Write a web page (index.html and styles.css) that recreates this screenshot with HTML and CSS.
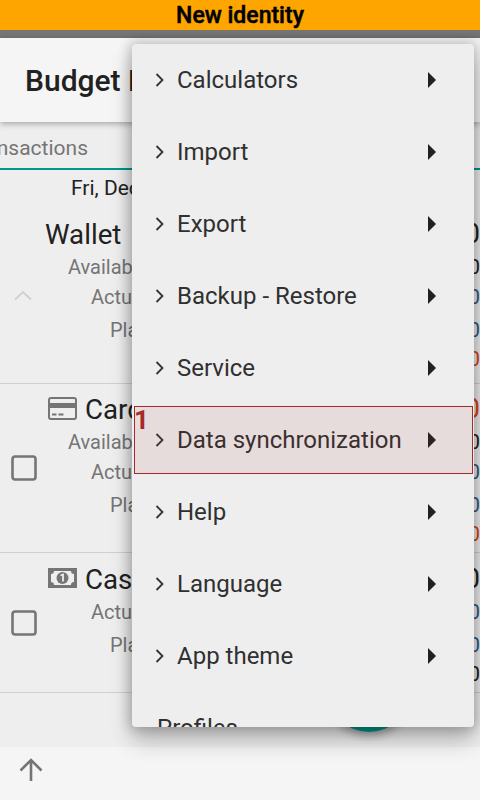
FILE: index.html
```html
<!DOCTYPE html>
<html lang="en">
<head>
<meta charset="utf-8">
<title>Budget</title>
<link rel="stylesheet" href="styles.css">
</head>
<body>
<div class="app">
  <header class="banner">New identity</header>
  <div class="status"></div>
  <div class="appbar"><h1 class="title">Budget Planner</h1></div>
  <nav class="tabs"><span class="tab">Transactions</span></nav>
  <main class="list">
    <div class="date">Fri, Dec 1</div>
    <section class="acct acct-wallet">
      <div class="lead">
        <svg class="chev-up" viewBox="0 0 20 12"><path d="M2 10.500 10 3l8 7.500" fill="none" stroke="#d0d0d0" stroke-width="1.800"/></svg>
      </div>
      <div class="lines">
        <div class="line name"><span class="nm nm-plain">Wallet</span><span class="val">0.00</span></div>
        <div class="line"><span class="lb lb-av">Available</span><span class="val">0.00</span></div>
        <div class="line"><span class="lb lb-ac">Actual</span><span class="val blue">0.00</span></div>
        <div class="line sp"><span class="lb lb-pl">Planned</span><span class="val blue">0.00</span></div>
        <div class="line tight"><span></span><span class="val red">0.00</span></div>
      </div>
    </section>
    <section class="acct acct-card">
      <div class="lead">
        <svg class="check" viewBox="0 0 26 26"><rect x="1.500" y="1.500" width="23" height="23" rx="2.500" fill="none" stroke="#757575" stroke-width="2.600"/></svg>
      </div>
      <div class="lines">
        <div class="line name"><span class="nm">
          <svg class="ico" viewBox="0 0 29 23"><rect x="1" y="1" width="27" height="21" rx="2" fill="none" stroke="#757575" stroke-width="2"/><rect x="1" y="6" width="27" height="5" fill="#757575"/><path d="M4 17.500h4.500M10.500 17.500h5" stroke="#757575" stroke-width="2"/></svg>Card</span><span class="val red">0.00</span></div>
        <div class="line"><span class="lb lb-av">Available</span><span class="val">0.00</span></div>
        <div class="line"><span class="lb lb-ac">Actual</span><span class="val blue">0.00</span></div>
        <div class="line sp"><span class="lb lb-pl">Planned</span><span class="val blue">0.00</span></div>
        <div class="line tight"><span></span><span class="val red">0.00</span></div>
      </div>
    </section>
    <section class="acct acct-cash">
      <div class="lead">
        <svg class="check" viewBox="0 0 26 26"><rect x="1.500" y="1.500" width="23" height="23" rx="2.500" fill="none" stroke="#757575" stroke-width="2.600"/></svg>
      </div>
      <div class="lines">
        <div class="line name"><span class="nm">
          <svg class="ico" viewBox="0 0 29 20"><path fill="#757575" d="M0 0h29v20H0z"/><path fill="#eee" d="M6 3h17a3 3 0 0 0 3 3v8a3 3 0 0 0-3 3H6a3 3 0 0 0-3-3V6a3 3 0 0 0 3-3z"/><circle cx="14.500" cy="10" r="6" fill="#757575"/><path d="M12.500 7.500 15 6.500v7" fill="none" stroke="#eee" stroke-width="1.800"/></svg>Cash</span><span class="val">0.00</span></div>
        <div class="line"><span class="lb lb-ac">Actual</span><span class="val blue">0.00</span></div>
        <div class="line sp"><span class="lb lb-pl">Planned</span><span class="val blue">0.00</span></div>
        <div class="line tight"><span></span><span class="val">0.00</span></div>
      </div>
    </section>
  </main>
  <footer class="bottom">
    <svg class="arrow" viewBox="0 0 26 26"><path d="M13 24V3M2.500 13.500 13 3l10.500 10.500" fill="none" stroke="#757575" stroke-width="2.600"/></svg>
  </footer>
  <div class="fab"></div>
  <div class="menu">
    <div class="item"><svg class="chev" viewBox="0 0 10 16"><path d="M1.500 2l6 6-6 6" fill="none" stroke="#333" stroke-width="1.800"/></svg><span class="label">Calculators</span><svg class="tri" viewBox="0 0 8 16"><path d="M0 0l8 8-8 8z" fill="#212121"/></svg></div>
    <div class="item"><svg class="chev" viewBox="0 0 10 16"><path d="M1.500 2l6 6-6 6" fill="none" stroke="#333" stroke-width="1.800"/></svg><span class="label">Import</span><svg class="tri" viewBox="0 0 8 16"><path d="M0 0l8 8-8 8z" fill="#212121"/></svg></div>
    <div class="item"><svg class="chev" viewBox="0 0 10 16"><path d="M1.500 2l6 6-6 6" fill="none" stroke="#333" stroke-width="1.800"/></svg><span class="label">Export</span><svg class="tri" viewBox="0 0 8 16"><path d="M0 0l8 8-8 8z" fill="#212121"/></svg></div>
    <div class="item"><svg class="chev" viewBox="0 0 10 16"><path d="M1.500 2l6 6-6 6" fill="none" stroke="#333" stroke-width="1.800"/></svg><span class="label">Backup - Restore</span><svg class="tri" viewBox="0 0 8 16"><path d="M0 0l8 8-8 8z" fill="#212121"/></svg></div>
    <div class="item"><svg class="chev" viewBox="0 0 10 16"><path d="M1.500 2l6 6-6 6" fill="none" stroke="#333" stroke-width="1.800"/></svg><span class="label">Service</span><svg class="tri" viewBox="0 0 8 16"><path d="M0 0l8 8-8 8z" fill="#212121"/></svg></div>
    <div class="item"><svg class="chev" viewBox="0 0 10 16"><path d="M1.500 2l6 6-6 6" fill="none" stroke="#333" stroke-width="1.800"/></svg><span class="label">Data synchronization</span><svg class="tri" viewBox="0 0 8 16"><path d="M0 0l8 8-8 8z" fill="#212121"/></svg><div class="mark"><span class="mark-n">1</span></div></div>
    <div class="item"><svg class="chev" viewBox="0 0 10 16"><path d="M1.500 2l6 6-6 6" fill="none" stroke="#333" stroke-width="1.800"/></svg><span class="label">Help</span><svg class="tri" viewBox="0 0 8 16"><path d="M0 0l8 8-8 8z" fill="#212121"/></svg></div>
    <div class="item"><svg class="chev" viewBox="0 0 10 16"><path d="M1.500 2l6 6-6 6" fill="none" stroke="#333" stroke-width="1.800"/></svg><span class="label">Language</span><svg class="tri" viewBox="0 0 8 16"><path d="M0 0l8 8-8 8z" fill="#212121"/></svg></div>
    <div class="item"><svg class="chev" viewBox="0 0 10 16"><path d="M1.500 2l6 6-6 6" fill="none" stroke="#333" stroke-width="1.800"/></svg><span class="label">App theme</span><svg class="tri" viewBox="0 0 8 16"><path d="M0 0l8 8-8 8z" fill="#212121"/></svg></div>
    <div class="item item-plain"><span class="label">Profiles</span></div>
  </div>
</div>
</body>
</html>
```
FILE: styles.css
```css
* { box-sizing: border-box; }
html, body { margin: 0; height: 100%; }
body { font-family: Roboto, "Noto Sans", sans-serif; background: #eee; }
.app { position: relative; width: 480px; height: 800px; overflow: hidden; display: flex; flex-direction: column; background: #eee; }
.banner { height: 30px; flex: none; background: #ffa500; color: #000; font-size: 23px; font-weight: 500; line-height: 32px; text-align: center; -webkit-text-stroke: 0.5px #000; }
.status { height: 8px; flex: none; background: #757575; }
.appbar { position: relative; z-index: 2; height: 84px; flex: none; background: #f5f5f5; display: flex; align-items: center; padding-left: 25px; box-shadow: 0 2px 6px rgba(0,0,0,.3); }
.title { margin: 0; font-size: 30px; font-weight: 500; color: #212121; white-space: nowrap; }
.tabs { height: 48px; flex: none; border-bottom: 2px solid #009688; display: flex; align-items: center; padding-top: 6px; }
.tab { width: 88px; display: flex; justify-content: flex-end; white-space: nowrap; font-size: 21px; color: #757575; }
.list { flex: 1; min-height: 0; }
.date { height: 36px; line-height: 36px; padding-left: 71px; font-size: 21px; color: #212121; }
.acct { display: flex; padding: 7px 0 3px; border-bottom: 1px solid #d0d0d0; }
.acct-wallet { padding: 10px 0 9px; }
.acct-cash { padding-top: 8px; }
.lead { width: 45px; flex: none; display: flex; align-items: center; justify-content: flex-start; }
.acct-card .lead { padding-bottom: 4px; }
.acct-cash .lead { padding-bottom: 5px; }
.check { width: 26px; height: 26px; margin-left: 11px; }
.chev-up { width: 20px; height: 12px; margin-left: 13px; }
.lines { flex: 1; min-width: 0; }
.line { height: 30px; display: flex; align-items: center; justify-content: space-between; white-space: nowrap; }
.line.name { height: 36px; }
.line.sp { margin-top: 3px; }
.line.tight { margin-top: -1px; }
.nm { display: flex; align-items: center; font-size: 27.700px; color: #212121; padding-left: 3px; }
.nm-plain { padding-left: 0; }
.ico { width: 29px; height: 23px; margin: -1px 8px 0 0; }
.acct-cash .ico { height: 20px; margin-top: -2px; }
.lb { font-size: 20px; color: #757575; }
.lb-av { padding-left: 23px; }
.lb-ac { padding-left: 46px; }
.lb-pl { padding-left: 65px; }
.val { font-size: 21px; color: #212121; }
.name .val { font-size: 27px; }
.blue { color: #2f5b83; }
.red { color: #d84315; }
.bottom { height: 53px; flex: none; background: #f5f5f5; display: flex; align-items: center; padding: 0 0 7px 18px; }
.arrow { width: 26px; height: 26px; }
.fab { position: absolute; left: 327px; top: 648px; width: 84px; height: 84px; border-radius: 50%; background: #009688; box-shadow: 0 4px 8px rgba(0,0,0,.3); }
.menu { position: absolute; z-index: 5; left: 132px; top: 44px; width: 342px; height: 683px; overflow: hidden; background: #eee; border-radius: 4px; box-shadow: 0 0 12px 3px rgba(0,0,0,.2), 0 14px 22px rgba(0,0,0,.24); }
.item { position: relative; height: 72px; display: flex; align-items: center; padding-left: 23px; color: #2b2b2b; }
.chev { width: 10px; height: 16px; flex: none; }
.label { font-size: 24px; padding-left: 12px; width: 264px; flex: none; white-space: nowrap; color: #303030; }
.item-plain .label { padding-left: 2px; }
.tri { width: 8px; height: 16px; flex: none; margin-left: -1px; }
.mark { position: absolute; left: 2px; top: 2px; right: 1px; bottom: 2px; background: rgba(165,42,42,.09); border: 1px solid #a52a2a; }
.mark-n { position: absolute; left: -1px; top: -1px; font-size: 26px; line-height: 28px; font-weight: 700; color: #a52a2a; }
```
